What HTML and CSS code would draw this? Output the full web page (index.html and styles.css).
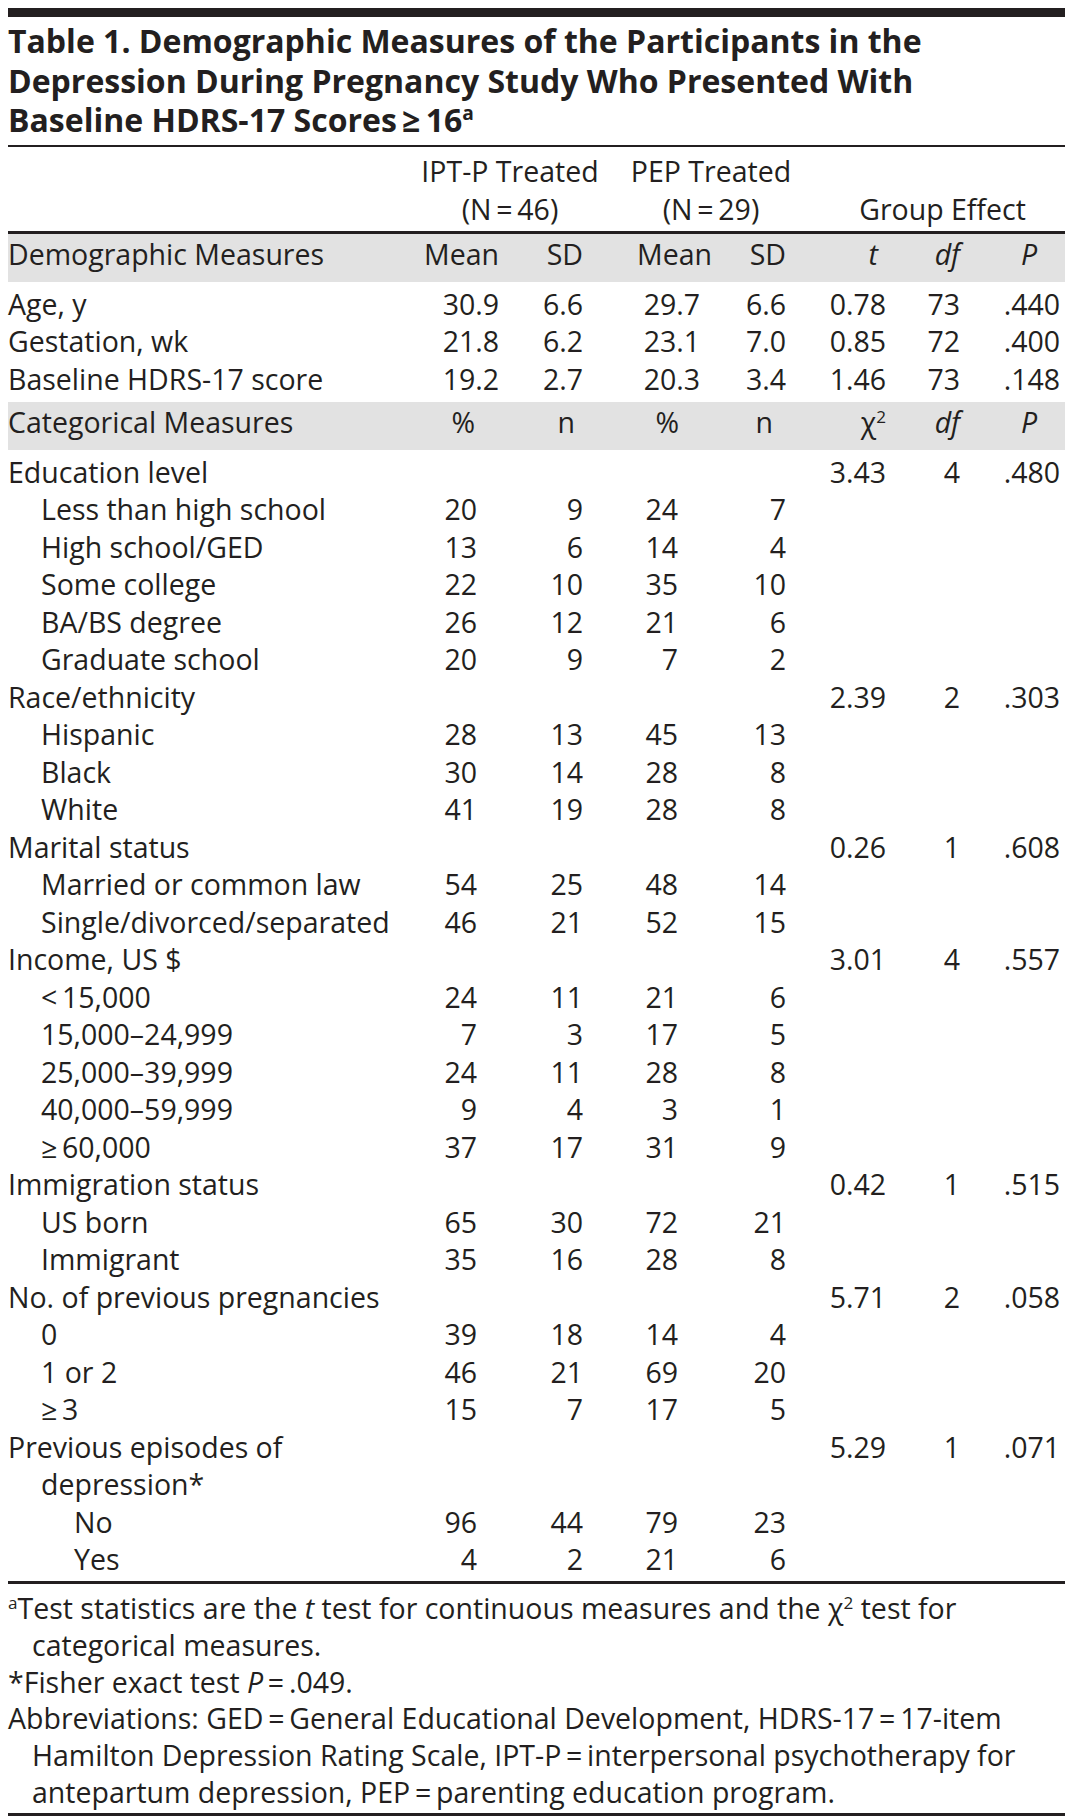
FILE: index.html
```html
<!DOCTYPE html>
<html lang="en">
<head>
<meta charset="utf-8">
<title>Table 1</title>
<link rel="stylesheet" href="styles.css">
</head>
<body>
<div class="page">
  <div class="topbar"></div>
  <h1 class="title">Table 1. Demographic Measures of the Participants in the<br>Depression During Pregnancy Study Who Presented With<br>Baseline HDRS-17 Scores&#8201;≥&#8201;16<span class="sup">a</span></h1>
  <div class="rule thin"></div>
  <table class="data">
    <colgroup>
      <col class="c0"><col class="c1"><col class="c2"><col class="c3"><col class="c4"><col class="c5"><col class="c6"><col class="c7">
    </colgroup>
    <tbody>
      <tr class="hd">
        <td class="l"></td>
        <td colspan="2" class="grp-cell"><div class="grp g1">IPT-P Treated<br>(N&#8201;=&#8201;46)</div></td>
        <td colspan="2" class="grp-cell"><div class="grp g2">PEP Treated<br>(N&#8201;=&#8201;29)</div></td>
        <td colspan="3" class="grp-cell bottom"><div class="grp g3">Group Effect</div></td>
      </tr>
      <tr class="band top">
        <td class="l">Demographic Measures</td>
        <td>Mean</td>
        <td>SD</td>
        <td class="h-mean2">Mean</td>
        <td>SD</td>
        <td class="h-t"><i>t</i></td>
        <td><i>df</i></td>
        <td class="h-p"><i>P</i></td>
      </tr>
      <tr class="first">
        <td class="l">Age, y</td><td>30.9</td><td>6.6</td><td>29.7</td><td>6.6</td><td>0.78</td><td>73</td><td>.440</td>
      </tr>
      <tr>
        <td class="l">Gestation, wk</td><td>21.8</td><td>6.2</td><td>23.1</td><td>7.0</td><td>0.85</td><td>72</td><td>.400</td>
      </tr>
      <tr class="last">
        <td class="l">Baseline HDRS-17 score</td><td>19.2</td><td>2.7</td><td>20.3</td><td>3.4</td><td>1.46</td><td>73</td><td>.148</td>
      </tr>
      <tr class="band">
        <td class="l">Categorical Measures</td>
        <td class="h-pc1">%</td>
        <td class="h-n1">n</td>
        <td class="h-pc2">%</td>
        <td class="h-n2">n</td>
        <td class="h-chi">χ<span class="sup">2</span></td>
        <td><i>df</i></td>
        <td class="h-p"><i>P</i></td>
      </tr>
      <tr class="first">
        <td class="l">Education level</td><td></td><td></td><td></td><td></td><td>3.43</td><td>4</td><td>.480</td>
      </tr>
      <tr><td class="l i1">Less than high school</td><td class="int">20</td><td>9</td><td class="int">24</td><td>7</td><td></td><td></td><td></td></tr>
      <tr><td class="l i1">High school/GED</td><td class="int">13</td><td>6</td><td class="int">14</td><td>4</td><td></td><td></td><td></td></tr>
      <tr><td class="l i1">Some college</td><td class="int">22</td><td>10</td><td class="int">35</td><td>10</td><td></td><td></td><td></td></tr>
      <tr><td class="l i1">BA/BS degree</td><td class="int">26</td><td>12</td><td class="int">21</td><td>6</td><td></td><td></td><td></td></tr>
      <tr><td class="l i1">Graduate school</td><td class="int">20</td><td>9</td><td class="int">7</td><td>2</td><td></td><td></td><td></td></tr>
      <tr>
        <td class="l">Race/ethnicity</td><td></td><td></td><td></td><td></td><td>2.39</td><td>2</td><td>.303</td>
      </tr>
      <tr><td class="l i1">Hispanic</td><td class="int">28</td><td>13</td><td class="int">45</td><td>13</td><td></td><td></td><td></td></tr>
      <tr><td class="l i1">Black</td><td class="int">30</td><td>14</td><td class="int">28</td><td>8</td><td></td><td></td><td></td></tr>
      <tr><td class="l i1">White</td><td class="int">41</td><td>19</td><td class="int">28</td><td>8</td><td></td><td></td><td></td></tr>
      <tr>
        <td class="l">Marital status</td><td></td><td></td><td></td><td></td><td>0.26</td><td>1</td><td>.608</td>
      </tr>
      <tr><td class="l i1">Married or common law</td><td class="int">54</td><td>25</td><td class="int">48</td><td>14</td><td></td><td></td><td></td></tr>
      <tr><td class="l i1">Single/divorced/separated</td><td class="int">46</td><td>21</td><td class="int">52</td><td>15</td><td></td><td></td><td></td></tr>
      <tr>
        <td class="l">Income, US $</td><td></td><td></td><td></td><td></td><td>3.01</td><td>4</td><td>.557</td>
      </tr>
      <tr><td class="l i1">&lt;&#8201;15,000</td><td class="int">24</td><td>11</td><td class="int">21</td><td>6</td><td></td><td></td><td></td></tr>
      <tr><td class="l i1">15,000–24,999</td><td class="int">7</td><td>3</td><td class="int">17</td><td>5</td><td></td><td></td><td></td></tr>
      <tr><td class="l i1">25,000–39,999</td><td class="int">24</td><td>11</td><td class="int">28</td><td>8</td><td></td><td></td><td></td></tr>
      <tr><td class="l i1">40,000–59,999</td><td class="int">9</td><td>4</td><td class="int">3</td><td>1</td><td></td><td></td><td></td></tr>
      <tr><td class="l i1">≥&#8201;60,000</td><td class="int">37</td><td>17</td><td class="int">31</td><td>9</td><td></td><td></td><td></td></tr>
      <tr>
        <td class="l">Immigration status</td><td></td><td></td><td></td><td></td><td>0.42</td><td>1</td><td>.515</td>
      </tr>
      <tr><td class="l i1">US born</td><td class="int">65</td><td>30</td><td class="int">72</td><td>21</td><td></td><td></td><td></td></tr>
      <tr><td class="l i1">Immigrant</td><td class="int">35</td><td>16</td><td class="int">28</td><td>8</td><td></td><td></td><td></td></tr>
      <tr>
        <td class="l">No. of previous pregnancies</td><td></td><td></td><td></td><td></td><td>5.71</td><td>2</td><td>.058</td>
      </tr>
      <tr><td class="l i1">0</td><td class="int">39</td><td>18</td><td class="int">14</td><td>4</td><td></td><td></td><td></td></tr>
      <tr><td class="l i1">1 or 2</td><td class="int">46</td><td>21</td><td class="int">69</td><td>20</td><td></td><td></td><td></td></tr>
      <tr><td class="l i1">≥&#8201;3</td><td class="int">15</td><td>7</td><td class="int">17</td><td>5</td><td></td><td></td><td></td></tr>
      <tr>
        <td class="l">Previous episodes of</td><td></td><td></td><td></td><td></td><td>5.29</td><td>1</td><td>.071</td>
      </tr>
      <tr><td class="l i1">depression*</td><td></td><td></td><td></td><td></td><td></td><td></td><td></td></tr>
      <tr><td class="l i2">No</td><td class="int">96</td><td>44</td><td class="int">79</td><td>23</td><td></td><td></td><td></td></tr>
      <tr><td class="l i2">Yes</td><td class="int">4</td><td>2</td><td class="int">21</td><td>6</td><td></td><td></td><td></td></tr>
    </tbody>
  </table>
  <div class="rule thick r3"></div>
  <div class="notes">
    <p class="note"><span class="sup">a</span>Test statistics are the <i>t</i> test for continuous measures and the χ<span class="sup">2</span> test for<br>categorical measures.</p>
    <p class="note">*Fisher exact test <i>P</i>&#8201;=&#8201;.049.</p>
    <p class="note">Abbreviations: GED&#8201;=&#8201;General Educational Development, HDRS-17&#8201;=&#8201;17-item<br>Hamilton Depression Rating Scale, IPT-P&#8201;=&#8201;interpersonal psychotherapy for<br>antepartum depression, PEP&#8201;=&#8201;parenting education program.</p>
  </div>
  <div class="rule thick r4"></div>
</div>
</body>
</html>
```

FILE: styles.css
```css
html, body {
  margin: 0;
  padding: 0;
  background: #ffffff;
}

body {
  color: #231f20;
  font-family: "Open Sans", "Noto Sans", "DejaVu Sans", sans-serif;
}

.page {
  width: 1057px;
  padding: 8px 8px 0 8px;
}

.topbar {
  height: 9px;
  background: #231f20;
}

.title {
  margin: 4px 0 0 0;
  font-size: 32px;
  font-weight: 700;
  line-height: 39.5px;
  letter-spacing: 0;
  white-space: nowrap;
}

.sup {
  font-size: 0.6em;
  vertical-align: 0.6em;
  line-height: 0;
}

.rule {
  background: #231f20;
}

.rule.thin {
  height: 2px;
  margin-top: 5.5px;
}

.rule.thick {
  height: 3px;
}

.rule.r3 {
  margin-top: 2.5px;
}

.rule.r4 {
  margin-top: 2.2px;
}

/* table */
.data {
  width: 1057px;
  table-layout: fixed;
  border-collapse: separate;
  border-spacing: 0;
  font-size: 28.5px;
  line-height: 37.5px;
}

.c0 { width: 412px; }
.c1 { width: 79px; }
.c2 { width: 84px; }
.c3 { width: 117px; }
.c4 { width: 86px; }
.c5 { width: 100px; }
.c6 { width: 74px; }
.c7 { width: 105px; }

.data td {
  padding: 0;
  white-space: nowrap;
  text-align: right;
  vertical-align: top;
}

.data td:last-child {
  padding-right: 5px;
}

.data td.l {
  text-align: left;
}

.data td.i1 {
  padding-left: 33px;
}

.data td.i2 {
  padding-left: 66px;
}

.data td.int {
  padding-right: 22px;
}

/* header group row */
.hd td {
  padding-top: 6px;
  padding-bottom: 3px;
}

.hd td.bottom {
  vertical-align: bottom;
}

.grp {
  text-align: center;
  white-space: nowrap;
}

.g1 {
  margin: 0 -40px 0 -40px;
  padding-left: 17px;
}

.g2 {
  margin-right: -40px;
  padding-left: 13px;
}

.g3 {
  padding-left: 39px;
}

/* bands */
.band td {
  background: #e2e2e2;
  padding-top: 2px;
  padding-bottom: 8px;
}

.band.top td {
  border-top: 3px solid #231f20;
}

.band td.h-mean2 { text-align: center; padding-left: 54px; }
.band td.h-t { padding-right: 8px; }
.band td.h-p { padding-right: 28px; }
.band td.h-pc1 { padding-right: 24px; }
.band td.h-n1 { padding-right: 8px; }
.band td.h-pc2 { padding-right: 21px; }
.band td.h-n2 { padding-right: 13px; }
.band td.h-chi { padding-right: 0; }

tr.first td {
  padding-top: 4px;
}

tr.last td {
  padding-bottom: 4px;
}

/* notes */
.notes {
  padding-top: 6px;
  font-size: 28.5px;
  line-height: 36.8px;
}

.note {
  margin: 0;
  padding-left: 24px;
  text-indent: -24px;
  white-space: nowrap;
}
```
